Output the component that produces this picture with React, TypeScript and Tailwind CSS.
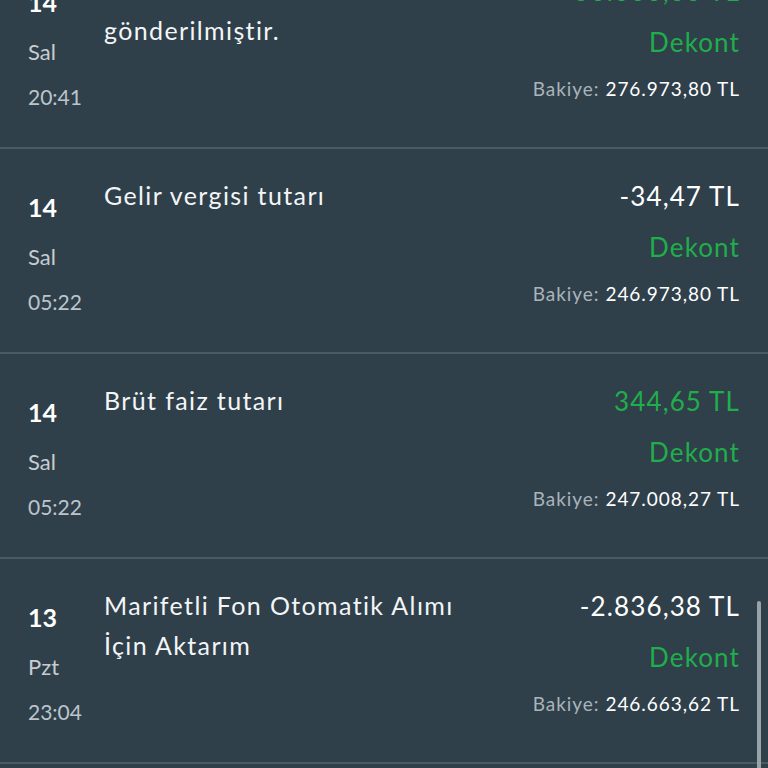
import React from 'react'

type Tx = {
    day: string
    weekday: string
    time: string
    title: string[]
    amount: string
    positive: boolean
    balance: string
}

const transactions: Tx[] = [
    {
        day: '14',
        weekday: 'Sal',
        time: '20:41',
        title: ['1500000780 nolu vadeli hesaba', 'gönderilmiştir.'],
        amount: '50.000,00 TL',
        positive: true,
        balance: '276.973,80 TL',
    },
    {
        day: '14',
        weekday: 'Sal',
        time: '05:22',
        title: ['Gelir vergisi tutarı'],
        amount: '-34,47 TL',
        positive: false,
        balance: '246.973,80 TL',
    },
    {
        day: '14',
        weekday: 'Sal',
        time: '05:22',
        title: ['Brüt faiz tutarı'],
        amount: '344,65 TL',
        positive: true,
        balance: '247.008,27 TL',
    },
    {
        day: '13',
        weekday: 'Pzt',
        time: '23:04',
        title: ['Marifetli Fon Otomatik Alımı', 'İçin Aktarım'],
        amount: '-2.836,38 TL',
        positive: false,
        balance: '246.663,62 TL',
    },
    {
        day: '13',
        weekday: 'Pzt',
        time: '18:10',
        title: ['Havale'],
        amount: '-1.000,00 TL',
        positive: false,
        balance: '249.500,00 TL',
    },
]

const TxRow = ({ tx }: { tx: Tx }) => (
    <div className="flex h-[205px] border-b-2 border-[#4b5a63] pl-[28px] pr-[28px]">
        <div className="flex flex-col pt-[42px]">
            <div className="text-[25px] leading-[32px] font-bold text-white">{tx.day}</div>
            <div className="mt-[19px] text-[22px] leading-[30px] text-[#c6cdd2]">{tx.weekday}</div>
            <div className="mt-[15px] text-[21px] leading-[30px] text-[#bcc5cb]">{tx.time}</div>
        </div>
        <div className="ml-[22px] flex-1 pt-[26px] text-[25px] leading-[40px] tracking-[0.055em] text-[#f3f5f6]">
            {tx.title.map((line) => (
                <div key={line}>{line}</div>
            ))}
        </div>
        <div className="flex flex-col items-end pt-[31px] tracking-[0.07em]">
            <div className={tx.positive ? 'text-[26px] leading-[32px] text-[#1fae4a]' : 'text-[26px] leading-[32px] text-white'}>
                {tx.amount}
            </div>
            <div className="mt-[19px] text-[26px] leading-[32px] text-[#1fae4a]">Dekont</div>
            <div className="mt-[18px] flex items-baseline gap-[6px] text-[19px] leading-[26px] tracking-[0.05em]">
                <span className="text-[#aab4ba]">Bakiye:</span>
                <span className="text-white">{tx.balance}</span>
            </div>
        </div>
    </div>
)

const App = () => {
    return (
        <div
            className="relative h-[768px] w-[768px] overflow-hidden bg-[#2f404b]"
            style={{ fontFamily: 'Lato, "Noto Sans", sans-serif' }}
        >
            <div className="-mt-[56px]">
                {transactions.map((tx, i) => (
                    <TxRow key={i} tx={tx} />
                ))}
            </div>
            {/* scrollbar thumb */}
            <div className="absolute right-[7px] top-[601px] h-[180px] w-[4px] rounded-full bg-[#98a2a8]" />
        </div>
    )
}

export default App
